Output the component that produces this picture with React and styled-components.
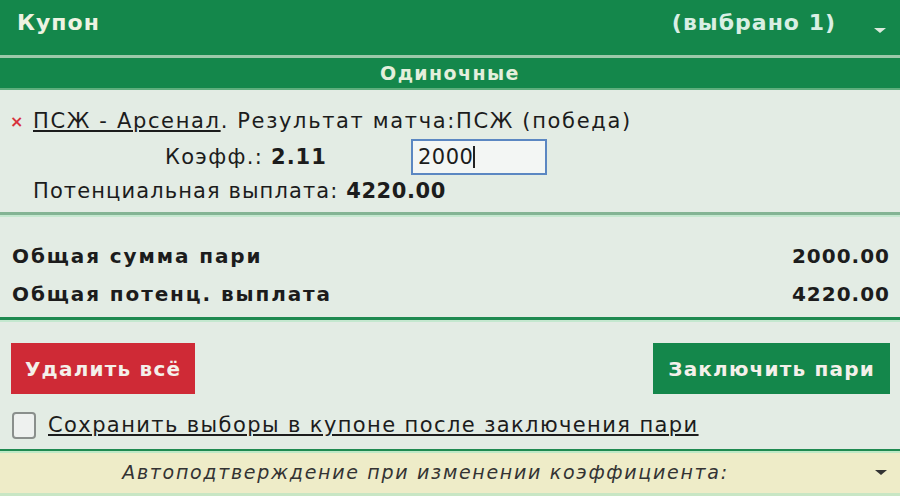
import React from 'react';
import styled, { createGlobalStyle } from 'styled-components';

const GlobalStyle = createGlobalStyle`
  html, body {
    margin: 0;
    padding: 0;
    background: #e3ece4;
    font-family: "DejaVu Sans", Verdana, sans-serif;
  }
`;

const Coupon = styled('div')`
  width: 900px;
  height: 496px;
  overflow: hidden;
  background: #e3ece4;
  color: #1c1c1c;
  display: flex;
  flex-direction: column;
`;

const Header = styled('div')`
  height: 49px;
  background: #14874b;
  display: flex;
  align-items: flex-start;
  padding: 6px 14px 0 17px;
  color: #eef3e2;
  font-weight: bold;
  font-size: 22px;
  letter-spacing: 1px;
  line-height: 34px;
  border-bottom: 3px solid #9cc9aa;
`;

const HeaderTitle = styled('div')`
  flex: 1;
`;

const Selected = styled('div')`
  margin-right: 38px;
  color: #d9efe4;
`;

const Caret = styled('span')`
  width: 0;
  height: 0;
  border-left: 6px solid transparent;
  border-right: 6px solid transparent;
  border-top: 5px solid ${p => p.color};
  margin-top: ${p => p.offset || 0}px;
`;

const SubHeader = styled('div')`
  height: 30px;
  background: #14874b;
  border-bottom: 2px solid #5fae7d;
  display: flex;
  align-items: center;
  justify-content: center;
  color: #e4efdc;
  font-weight: bold;
  font-size: 19px;
  letter-spacing: 1.4px;
`;

const BetBlock = styled('div')`
  padding: 14px 0 0 10px;
  height: 108px;
  font-size: 21px;
  letter-spacing: 1.65px;
  border-bottom: 3px solid #84b494;
  box-shadow: 0 2px 0 #c4e8cf;
`;

const BetLine = styled('div')`
  display: flex;
  align-items: center;
  height: ${p => p.h}px;
  padding-left: ${p => p.indent || 0}px;
  white-space: pre;
`;

const Remove = styled('span')`
  color: #d8323c;
  font-size: 16px;
  font-weight: bold;
  width: 23px;
  letter-spacing: 0;
`;

const Link = styled('span')`
  text-decoration: underline;
`;

const Coef = styled('div')`
  width: 246px;
  letter-spacing: 1.3px;
`;

const Strong = styled('b')`
  letter-spacing: ${p => p.ls}px;
`;

const Payout = styled('span')`
  letter-spacing: 1.1px;
`;

const AmountBox = styled('div')`
  width: 127px;
  height: 32px;
  border: 2px solid #5b87c2;
  background: #f3f6f4;
  display: flex;
  align-items: center;
  padding-left: 5px;
  box-sizing: content-box;
  letter-spacing: 0.5px;
`;

const Cursor = styled('span')`
  width: 2px;
  height: 22px;
  background: #222;
`;

const Totals = styled('div')`
  padding: 22px 10px 0 12px;
  height: 80px;
  border-bottom: 3px solid #1f8a50;
  box-shadow: 0 2px 0 #c4e8cf;
`;

const TotalRow = styled('div')`
  display: flex;
  justify-content: space-between;
  align-items: center;
  height: 38px;
  font-weight: bold;
  font-size: 20px;
  letter-spacing: 1.9px;
`;

const Amount = styled('span')`
  letter-spacing: 1px;
`;

const Actions = styled('div')`
  padding: 23px 10px 0 11px;
  display: flex;
  justify-content: space-between;
`;

const Button = styled('button')`
  height: 51px;
  border: none;
  padding: 0 ${p => p.pad}px;
  background: ${p => p.bg};
  color: #f4f0ea;
  font-family: "DejaVu Sans", Verdana, sans-serif;
  font-weight: bold;
  font-size: 20px;
  letter-spacing: 1.2px;
`;

const KeepRow = styled('label')`
  display: flex;
  align-items: center;
  gap: 12px;
  padding: 16px 0 0 12px;
  height: 30px;
  font-size: 21px;
  letter-spacing: 1.4px;
`;

const Box = styled('span')`
  width: 20px;
  height: 23px;
  border: 2px solid #8a8f8c;
  border-radius: 4px;
  background: #eef1ef;
`;

const AutoBar = styled('div')`
  margin-top: 9px;
  border-top: 2px solid #1f8a50;
  box-shadow: inset 0 2px 0 #bfe9c6;
  border-bottom: 3px solid #c8e6c4;
  flex: 1;
  background: #eeecc8;
  display: flex;
  align-items: center;
  padding: 0 13px 0 0;
  font-style: italic;
  font-size: 19px;
  letter-spacing: 1.7px;
  color: #333;
`;

const AutoText = styled('div')`
  flex: 1;
  text-align: center;
  padding-right: 24px;
`;

export default function App() {
  return (
    <Coupon>
      <GlobalStyle />
      <Header>
        <HeaderTitle>Купон</HeaderTitle>
        <Selected>(выбрано 1)</Selected>
        <Caret color="#dce9dc" offset={22} />
      </Header>
      <SubHeader>Одиночные</SubHeader>
      <BetBlock>
        <BetLine h={34}>
          <Remove>×</Remove>
          <Link>ПСЖ - Арсенал</Link>. Результат матча:ПСЖ (победа)
        </BetLine>
        <BetLine h={38} indent={155}>
          <Coef>Коэфф.: <Strong ls={1}>2.11</Strong></Coef>
          <AmountBox>2000<Cursor /></AmountBox>
        </BetLine>
        <BetLine h={30} indent={23}>
          <Payout>Потенциальная выплата: <Strong ls={0.6}>4220.00</Strong></Payout>
        </BetLine>
      </BetBlock>
      <Totals>
        <TotalRow><span>Общая сумма пари</span><Amount>2000.00</Amount></TotalRow>
        <TotalRow><span>Общая потенц. выплата</span><Amount>4220.00</Amount></TotalRow>
      </Totals>
      <Actions>
        <Button bg="#cf2a36" pad={14}>Удалить всё</Button>
        <Button bg="#14874b" pad={15}>Заключить пари</Button>
      </Actions>
      <KeepRow>
        <Box />
        <Link>Сохранить выборы в купоне после заключения пари</Link>
      </KeepRow>
      <AutoBar>
        <AutoText>Автоподтверждение при изменении коэффициента:</AutoText>
        <Caret color="#333" />
      </AutoBar>
    </Coupon>
  );
}
